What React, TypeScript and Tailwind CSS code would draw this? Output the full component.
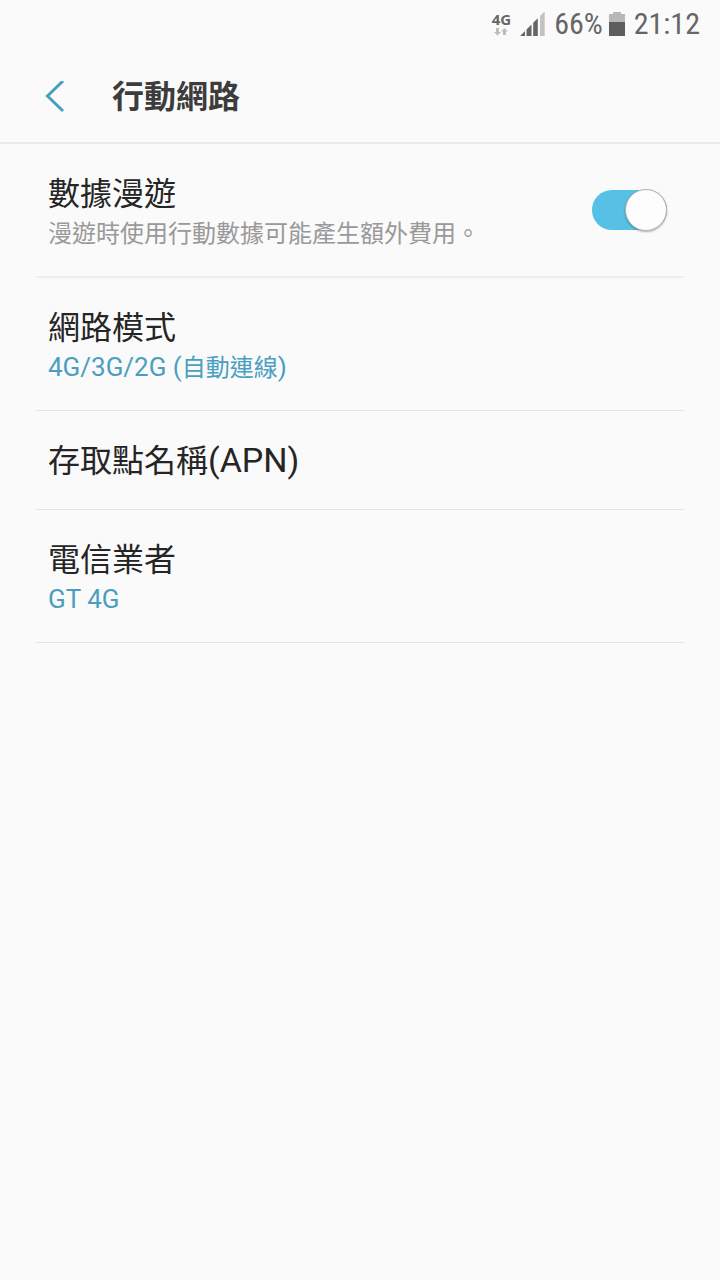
import { useState } from "react";
import type { ReactNode } from "react";

const StatusBar = () => (
  <div className="flex h-12 items-center justify-end pr-5 text-[#666666]">
    {/* Network type with the data arrows */}
    <div className="mr-[9px] flex flex-col items-center gap-0.5">
      <span className="font-['Open_Sans',sans-serif] text-[15px] leading-[14px] font-bold">4G</span>
      <svg className="h-[8px] w-[14px]" viewBox="0 0 14 8" fill="#bdbdbd" aria-hidden="true">
        <path d="M2 0h3v4h2L3.500 7.500 0 4h2z" />
        <path d="M9 7h3V3.500h2L10.500 0 7 3.500h2z" />
      </svg>
    </div>
    <svg className="mr-[9px] h-6 w-[25px]" viewBox="0 0 25 24" aria-hidden="true">
      <path d="M0 24l5-5v5zM6.500 24v-6.500l5-5V24zM13.200 24V10.800l4.600-4.600V24z" fill="#666666" />
      <path d="M20 24V4l4.700-4.700V24z" fill="#c2c2c2" />
    </svg>
    <span className="font-['Roboto_Condensed','Liberation_Sans_Narrow',Roboto,sans-serif] text-[30px] leading-9">66%</span>
    <svg className="mr-[9px] ml-[6px] h-6 w-4" viewBox="0 0 16 24" aria-hidden="true">
      <path d="M0 2h4V0h8v2h4v8H0z" fill="#b8b8b8" />
      <path d="M0 10h16v14H0z" fill="#5e5e5e" />
    </svg>
    <span className="font-['Roboto_Condensed','Liberation_Sans_Narrow',Roboto,sans-serif] text-[30px] leading-9">21:12</span>
  </div>
);

const Header = () => (
  <header className="flex h-24 items-center border-b-2 border-[#e9e9e9] pt-1 pl-[45px]">
    <button type="button" aria-label="返回" className="mr-[47px] cursor-pointer">
      <svg className="h-8 w-5" viewBox="0 0 20 32" fill="none" stroke="#4a9fc1" strokeWidth="3" aria-hidden="true">
        <path d="M18 0L2.500 15 18 30" />
      </svg>
    </button>
    <h1 className="text-[32px] leading-10 font-bold text-[#3c3c3c]">行動網路</h1>
  </header>
);

type RowProps = {
  title: ReactNode;
  summary?: ReactNode;
};

const LinkRow = ({ title, summary }: RowProps) => (
  <li className="border-b border-[#e4e4e4]">
    <button
      type="button"
      className={`flex w-full cursor-pointer flex-col px-3 pt-[30px] text-left ${summary ? "pb-[22px]" : "pb-7"}`}
    >
      <span className="text-[32px] leading-10 text-[#252525]">{title}</span>
      {summary && <span className="text-[24px] leading-10 text-[#4a9fc1]">{summary}</span>}
    </button>
  </li>
);

const RoamingRow = () => {
  const [roaming, setRoaming] = useState(true);

  return (
    <li className="border-b-2 border-[#eeeeee]">
      <label className="flex cursor-pointer items-center justify-between pt-[30px] pr-[17px] pb-[22px] pl-3">
        <span className="flex flex-col">
          <span className="text-[32px] leading-10 text-[#252525]">數據漫遊</span>
          <span className="text-[24px] leading-10 text-[#999999]">漫遊時使用行動數據可能產生額外費用。</span>
        </span>
        <span className="relative mb-2 h-10 w-[75px] shrink-0">
          <input
            type="checkbox"
            role="switch"
            checked={roaming}
            onChange={(e) => setRoaming(e.target.checked)}
            className="peer block h-10 w-full cursor-pointer appearance-none rounded-full bg-[#c8c8c8] checked:bg-[#56c0e5]"
          />
          <span className="pointer-events-none absolute -top-px left-0 size-[42px] rounded-full border border-[#b4b4b4] bg-[#fdfdfd] shadow-[0_1px_2px_rgba(0,0,0,0.3)] peer-checked:right-0 peer-checked:left-auto" />
        </span>
      </label>
    </li>
  );
};

const App = () => {
  return (
    <div className="min-h-screen bg-[#fafafa] font-[Roboto,'Noto_Sans_CJK_TC',sans-serif]">
      <StatusBar />
      <Header />
      <ul className="px-9">
        <RoamingRow />
        <LinkRow
          title="網路模式"
          summary={
            <>
              <span className="text-[26px] leading-none">4G/3G/2G (</span>自動連線<span className="text-[26px] leading-none">)</span>
            </>
          }
        />
        <LinkRow title={<>存取點名稱<span className="text-[34px] leading-none">(APN)</span></>} />
        <LinkRow title="電信業者" summary={<span className="text-[26px] leading-none">GT 4G</span>} />
      </ul>
    </div>
  );
};

export default App;
